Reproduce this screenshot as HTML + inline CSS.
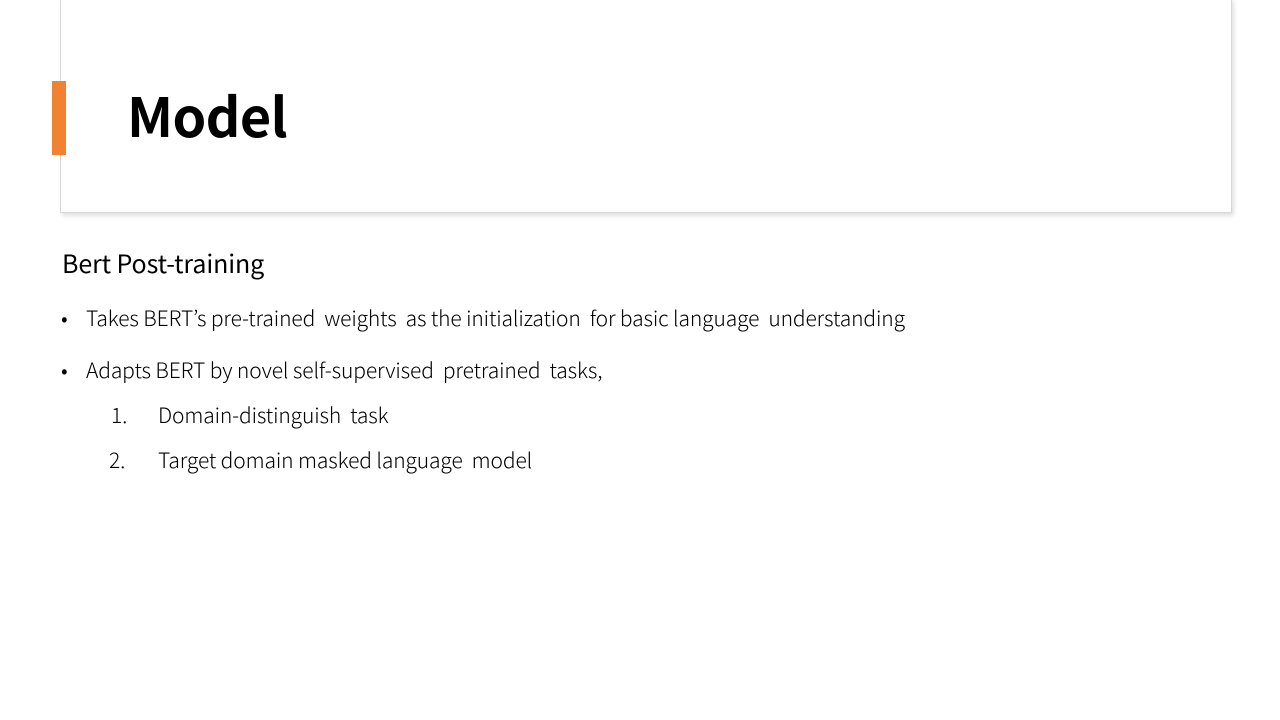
<!DOCTYPE html>
<html><head><meta charset="utf-8"><style>
body{margin:0;width:1280px;height:720px;background:#fff;position:relative;overflow:hidden;font-family:"Liberation Sans","Noto Sans CJK KR",sans-serif;}
.box{position:absolute;left:60px;top:-2px;width:1170px;height:213px;border:1px solid #d8d8d8;box-shadow:2px 3px 4px rgba(0,0,0,0.12);background:#fff;}
.bar{position:absolute;left:52px;top:81px;width:14px;height:74px;background:#f08232;}
.t{position:absolute;white-space:pre;color:#000;font-family:"Noto Sans CJK KR","Noto Sans CJK JP",sans-serif;}
h1{position:absolute;left:127px;top:77px;margin:0;font-size:54px;font-weight:bold;line-height:74px;font-family:"Noto Sans CJK KR",sans-serif;letter-spacing:-0.6px;}
.b{font-size:21px;font-weight:300;line-height:30px;letter-spacing:-0.12px;}
</style></head><body>
<div class="box"></div><div class="bar"></div>
<h1>Model</h1>
<div class="t" style="left:62px;top:246px;font-size:25px;line-height:34px;letter-spacing:-0.1px;">Bert Post-training</div>
<div class="t b" style="left:61px;top:303px;">•</div>
<div class="t b" style="left:86px;top:303px;">Takes BERT’s pre-trained  weights  as the initialization  for basic language  understanding</div>
<div class="t b" style="left:61px;top:355px;">•</div>
<div class="t b" style="left:86px;top:355px;">Adapts BERT by novel self-supervised  pretrained  tasks,</div>
<div class="t b" style="left:111px;top:400px;">1.</div>
<div class="t b" style="left:158px;top:400px;">Domain-distinguish  task</div>
<div class="t b" style="left:109px;top:445px;">2.</div>
<div class="t b" style="left:158px;top:445px;">Target domain masked language  model</div>
</body></html>
